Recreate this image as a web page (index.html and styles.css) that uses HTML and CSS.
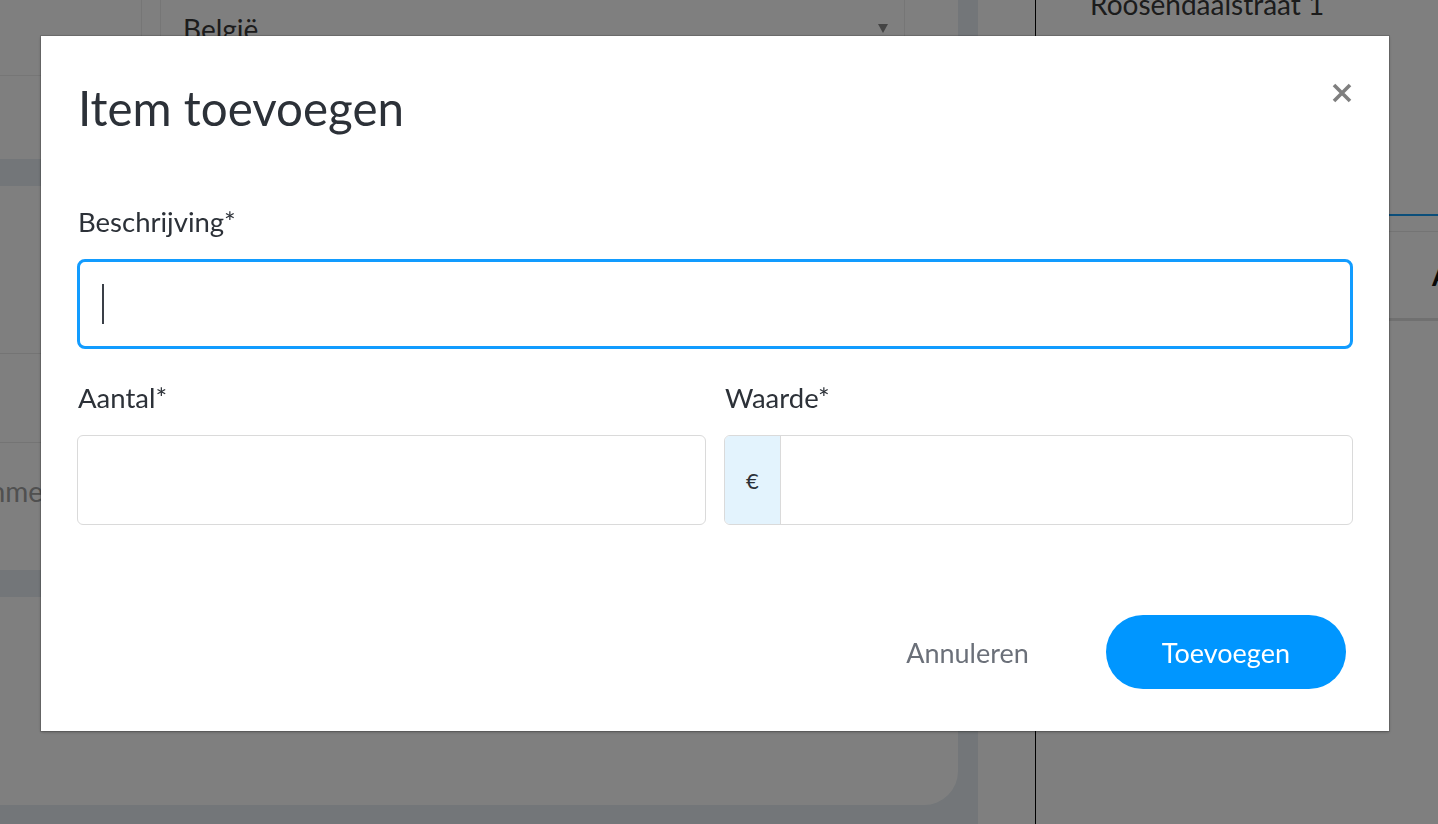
FILE: index.html
```html
<!DOCTYPE html>
<html lang="nl">
<head>
<meta charset="utf-8">
<title>Item toevoegen</title>
<link rel="stylesheet" href="styles.css">
</head>
<body>
<div class="app">
  <main class="main">
    <section class="card card-top">
      <div class="top-row">
        <div class="cell-label"></div>
        <div class="select"><span>België</span><span class="select-caret"></span></div>
      </div>
    </section>
    <section class="card card-mid">
      <div class="row row-a"></div>
      <div class="row row-b"></div>
      <div class="row row-c"><span class="placeholder">Commentaar</span></div>
    </section>
    <section class="card card-bottom"></section>
  </main>
  <div class="spacer"></div>
  <aside class="side">
    <p class="address">Roosendaalstraat 1</p>
    <div class="tab-active-line"></div>
    <div class="tabs"><span class="tab">Artikelen</span></div>
  </aside>
</div>

<div class="overlay"></div>

<div class="modal" role="dialog" aria-labelledby="modal-title">
  <div class="modal-header">
    <h2 class="modal-title" id="modal-title">Item toevoegen</h2>
    <button class="close" type="button" aria-label="Sluiten">
      <svg viewBox="0 0 20 20" width="20" height="20"><path d="M2 2 L18 18 M18 2 L2 18" stroke="#7f7f7f" stroke-width="3.6" stroke-linecap="butt" fill="none"/></svg>
    </button>
  </div>

  <div class="form-group first">
    <label class="field-label">Beschrijving*</label>
    <div class="input input-focus"><span class="text-caret"></span></div>
  </div>

  <div class="form-row">
    <div class="form-group">
      <label class="field-label">Aantal*</label>
      <div class="input"></div>
    </div>
    <div class="form-group">
      <label class="field-label">Waarde*</label>
      <div class="input input-group"><span class="addon">€</span><span class="input-fill"></span></div>
    </div>
  </div>

  <div class="modal-footer">
    <button class="btn-link" type="button">Annuleren</button>
    <button class="btn-primary" type="button">Toevoegen</button>
  </div>
</div>
</body>
</html>
```

FILE: styles.css
```css
* { box-sizing: border-box; }

html, body {
  margin: 0;
  padding: 0;
  width: 1438px;
  height: 824px;
  overflow: hidden;
}

body {
  font-family: Lato, "Open Sans", "Noto Sans", sans-serif;
  background: #e6edf2;
}

.app {
  display: flex;
  width: 1438px;
  height: 824px;
  background: #e6edf2;
}

/* background page */
.main {
  flex: 0 0 958px;
  margin-right: 20px;
  display: flex;
  flex-direction: column;
  gap: 27px;
}

.card {
  background: #fff;
}

.card-top { height: 159px; flex-shrink: 0; }
.card-mid { height: 384px; flex-shrink: 0; }
.card-bottom {
  height: 208px;
  flex-shrink: 0;
  border-bottom-right-radius: 34px;
}

.top-row {
  display: flex;
  align-items: flex-start;
}

.cell-label {
  flex: 0 0 142px;
  height: 76px;
  border-right: 1px solid #ececec;
  border-bottom: 1px solid #ececec;
}

.select {
  flex: 0 0 745px;
  margin-left: 18px;
  height: 58px;
  border: 1px solid #ececec;
  border-top: 0;
  display: flex;
  align-items: center;
  justify-content: space-between;
  padding: 0 16px 0 22px;
  font-size: 28px;
  line-height: 34px;
  color: #383838;
}

.select-caret {
  width: 0;
  height: 0;
  border-left: 5px solid transparent;
  border-right: 5px solid transparent;
  border-top: 9px solid #888;
}

.row {
  border-bottom: 1px solid #e8e8e8;
}

.row-a { height: 168px; }
.row-b { height: 89px; }
.row-c {
  border-bottom: 0;
  padding-top: 31px;
  overflow: hidden;
}

.placeholder {
  display: block;
  margin-left: -52px;
  font-size: 28px;
  line-height: 34px;
  color: #a0a0a0;
  white-space: nowrap;
}

.spacer {
  flex: 0 0 58px;
  background: #fff;
  border-right: 1px solid #000;
}

.side {
  flex: 1 1 auto;
  min-width: 0;
  background: #fff;
  display: flex;
  flex-direction: column;
  overflow: hidden;
}

.address {
  margin: -13px 0 0 54px;
  font-size: 28px;
  line-height: 34px;
  color: #383838;
  white-space: nowrap;
}

.tab-active-line {
  margin-top: 193px;
  height: 2px;
  background: #169cf5;
}

.tabs {
  margin-top: 15px;
  height: 90px;
  border-top: 1px solid #e8e8e8;
  border-bottom: 3px solid #e0e0e0;
  display: flex;
  align-items: center;
  padding-left: 396px;
  overflow: hidden;
}

.tab {
  font-size: 28px;
  font-weight: 700;
  color: #111;
  white-space: nowrap;
}

/* overlay + modal */
.overlay {
  position: fixed;
  inset: 0;
  background: rgba(0, 0, 0, 0.5);
}

.modal {
  position: fixed;
  left: 41px;
  top: 36px;
  width: 1348px;
  height: 695px;
  background: #fff;
  padding: 0 36px;
  box-shadow: 0 0 0 1px rgba(0, 0, 0, 0.12), 0 1px 3px rgba(0, 0, 0, 0.3);
  color: #2c3138;
}

.modal-header {
  display: flex;
  justify-content: space-between;
  align-items: flex-start;
  padding-top: 44px;
}

.modal-title {
  margin: 0 0 0 1px;
  font-size: 47.5px;
  line-height: 56px;
  font-weight: 400;
  color: #2c3138;
}

.close {
  width: 20px;
  height: 20px;
  margin: 3px 1px 0 0;
  padding: 0;
  border: 0;
  background: none;
  display: block;
}

.close svg { display: block; }

.form-group.first { margin-top: 69px; }

.field-label {
  display: block;
  margin: 0 0 20px 1px;
  font-size: 27.5px;
  line-height: 34px;
  color: #2c3138;
}

.input {
  height: 90px;
  border: 1px solid #dadada;
  border-radius: 6px;
  background: #fff;
}

.input-focus {
  border: 3px solid #129cff;
  border-radius: 8px;
  display: flex;
  align-items: center;
  padding-left: 22px;
}

.text-caret {
  width: 2px;
  height: 40px;
  background: #3a3f47;
}

.form-row {
  margin-top: 32px;
  display: grid;
  grid-template-columns: 1fr 1fr;
  gap: 18px;
}

.input-group {
  display: flex;
  overflow: hidden;
}

.addon {
  width: 56px;
  background: #e3f3fd;
  border-right: 1px solid #dadada;
  display: flex;
  align-items: center;
  justify-content: center;
  font-size: 22px;
  color: #2c3138;
}

.input-fill { flex: 1; }

.modal-footer {
  margin-top: 90px;
  display: flex;
  justify-content: flex-end;
  align-items: center;
  gap: 57px;
  padding-right: 7px;
}

.btn-link {
  height: 74px;
  padding: 0 20px;
  border: 0;
  background: none;
  font-family: inherit;
  font-size: 27px;
  color: #6b7079;
}

.btn-primary {
  height: 74px;
  padding: 0 56px;
  border: 0;
  border-radius: 37px;
  background: #0096ff;
  color: #fff;
  font-family: inherit;
  font-size: 27px;
}
```
